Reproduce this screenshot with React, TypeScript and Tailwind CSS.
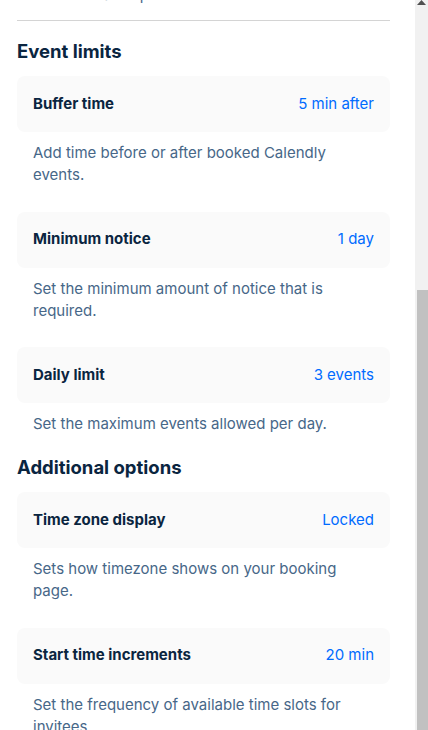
import React from 'react';

type Item = { title: string; value: string; desc: string };

const eventLimits: Item[] = [
  { title: 'Buffer time', value: '5 min after', desc: 'Add time before or after booked Calendly events.' },
  { title: 'Minimum notice', value: '1 day', desc: 'Set the minimum amount of notice that is required.' },
  { title: 'Daily limit', value: '3 events', desc: 'Set the maximum events allowed per day.' },
];

const additionalOptions: Item[] = [
  { title: 'Time zone display', value: 'Locked', desc: 'Sets how timezone shows on your booking page.' },
  { title: 'Start time increments', value: '20 min', desc: 'Set the frequency of available time slots for invitees.' },
];

const Setting = ({ item, last }: { item: Item; last?: boolean }) => (
  <div className={last ? 'pb-[20px]' : 'pb-[25.5px]'}>
    <div className="h-[56px] rounded-lg bg-[#fafafa] flex items-center justify-between px-4">
      <span className="text-[15px] font-bold text-[#0a2540]">{item.title}</span>
      <span className="text-[15px] text-[#006bff]">{item.value}</span>
    </div>
    <p className="pl-4 pr-6 pt-[10px] text-[15px] leading-[22px] text-[#476788]">{item.desc}</p>
  </div>
);

const Section = ({ title, items }: { title: string; items: Item[] }) => (
  <div>
    <h2 className="text-[18.5px] leading-[24px] font-bold text-[#0a2540] mb-[13px]">{title}</h2>
    {items.map((item, i) => (
      <Setting key={item.title} item={item} last={i === items.length - 1} />
    ))}
  </div>
);

export default function App() {
  return (
    <div
      className="w-[428px] h-[730px] overflow-hidden bg-white flex items-start"
      style={{ fontFamily: 'Inter, "Noto Sans", sans-serif' }}
    >
      <main className="w-[415px] shrink-0 pl-[17px] pr-[25px]">
        <p className="-mt-[16px] pl-[61px] text-[15px] leading-[22px] text-[#476788]">+ Date-specific times</p>
        <div className="h-px bg-[#d4d4d4] mb-[18px] mt-[14px]" />
        <Section title="Event limits" items={eventLimits} />
        <Section title="Additional options" items={additionalOptions} />
      </main>

      {/* Scrollbar */}
      <div className="w-[13px] h-[730px] shrink-0 bg-[#f1f1f1] flex flex-col">
        <div className="h-[290px] shrink-0 flex justify-center">
          <svg width="9" height="6" viewBox="0 0 9 6">
            <path d="M4.5 0 L9 5 L0 5 Z" fill="#505050" />
          </svg>
        </div>
        <div className="flex-1 ml-[2px] bg-[#c1c1c1]" />
      </div>
    </div>
  );
}
